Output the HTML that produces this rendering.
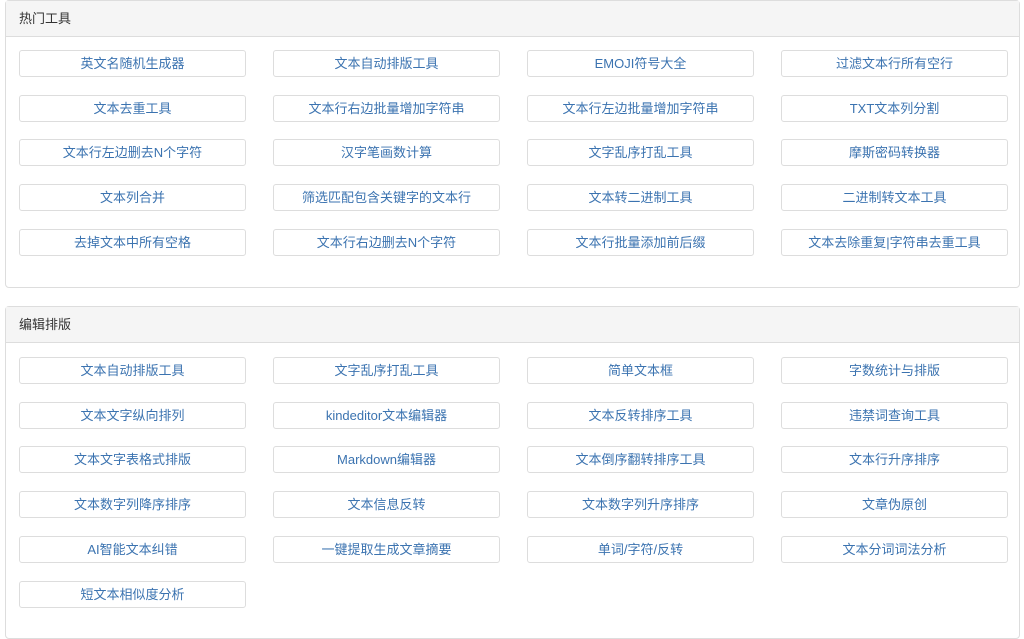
<!DOCTYPE html>
<html><head><meta charset="utf-8"><style>
body{margin:0;background:#fff;font-family:"Liberation Sans","Noto Sans CJK SC",sans-serif;width:1024px;height:639px;overflow:hidden;position:relative}
.p{position:absolute;left:5px;width:1015px;border:1px solid #ddd;border-radius:4px;box-sizing:border-box}
.h{height:36px;background:#f5f5f5;border-bottom:1px solid #ddd;font-size:13px;color:#333;line-height:36px;padding-left:13px;box-sizing:border-box}
.b{position:absolute;width:227px;height:27px;border:1px solid #ddd;border-radius:3px;box-sizing:border-box;font-size:13px;color:#3b73b0;text-align:center;line-height:25px;background:#fff;white-space:nowrap}
</style></head><body>
<div class="p" style="top:0;height:288px"><div class="h">热门工具</div></div>
<div class="p" style="top:306px;height:333px"><div class="h">编辑排版</div></div>
<div id="c"></div>
<script>
var a=[["英文名随机生成器","文本自动排版工具","EMOJI符号大全","过滤文本行所有空行","文本去重工具","文本行右边批量增加字符串","文本行左边批量增加字符串","TXT文本列分割","文本行左边删去N个字符","汉字笔画数计算","文字乱序打乱工具","摩斯密码转换器","文本列合并","筛选匹配包含关键字的文本行","文本转二进制工具","二进制转文本工具","去掉文本中所有空格","文本行右边删去N个字符","文本行批量添加前后缀","文本去除重复|字符串去重工具"],
["文本自动排版工具","文字乱序打乱工具","简单文本框","字数统计与排版","文本文字纵向排列","kindeditor文本编辑器","文本反转排序工具","违禁词查询工具","文本文字表格式排版","Markdown编辑器","文本倒序翻转排序工具","文本行升序排序","文本数字列降序排序","文本信息反转","文本数字列升序排序","文章伪原创","AI智能文本纠错","一键提取生成文章摘要","单词/字符/反转","文本分词词法分析","短文本相似度分析"]];
var xs=[19,273,527,781],tops=[50,357],h="";
a.forEach(function(l,s){l.forEach(function(t,i){var r=Math.floor(i/4),c=i%4;h+='<div class="b" style="left:'+xs[c]+'px;top:'+Math.round(tops[s]+r*44.7)+'px">'+t+'</div>';});});
document.getElementById("c").innerHTML=h;
</script>
</body></html>
